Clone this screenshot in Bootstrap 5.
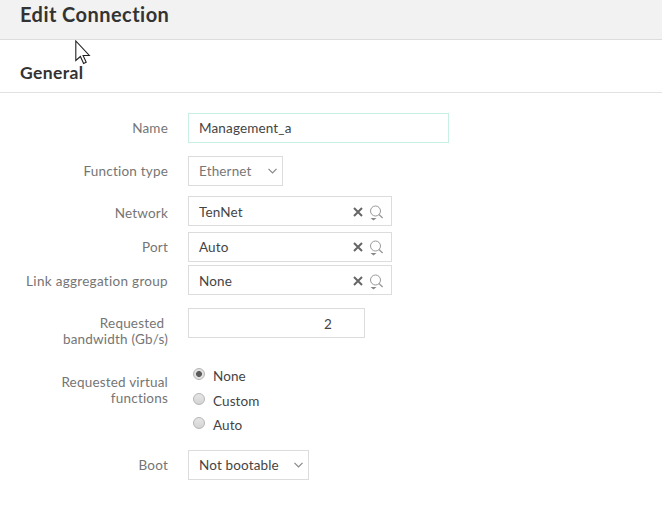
<!DOCTYPE html>
<html lang="en">
<head>
<meta charset="utf-8">
<meta name="viewport" content="width=device-width, initial-scale=1">
<title>Edit Connection</title>
<link href="https://cdn.jsdelivr.net/npm/bootstrap@5.3.0/dist/css/bootstrap.min.css" rel="stylesheet">
<style>
body{font-family:Lato,"Open Sans",sans-serif;font-size:13.5px;line-height:16px;color:#444;height:518px;overflow:hidden;background:#fff}
.page-head{height:40px;background:#f2f2f2;border-bottom:1px solid #dcdcdc;padding:2px 20px 0}
.page-head h1{font-size:20px;line-height:24px;font-weight:700;color:#333;letter-spacing:.45px}
.section-head{height:53px;border-bottom:1px solid #e2e2e2;padding:21px 20px 0}
.section-head h2{font-size:17.5px;line-height:24px;font-weight:700;color:#333;letter-spacing:.4px}
.field-row{gap:20px}
.field-label{width:168px;color:#757575;letter-spacing:.2px;flex:none}
.box{height:30px;border:1px solid #dcdcdc;padding:0 10px;letter-spacing:.15px;background:#fff;border-radius:0}
.box-active{border-color:#c9f0e4}
.muted{color:#777}
.w-name{width:261px}.w-func{width:95px}.w-pick{width:204px;padding-right:8px}.w-band{width:177px;padding-right:32px}.w-boot{width:121px}
.w-func,.w-boot{padding-right:5px}
.r-name{margin-top:20px}.r-func{margin-top:13px}.r-net{margin-top:10px}.r-port{margin-top:6px}.r-lag{margin-top:3px}.r-lag .field-label{letter-spacing:.3px;padding-top:2px}.r-band{margin-top:13px}
.r-net .field-label{padding-top:4px}
.r-net .box,.r-lag .box,.r-band .box{padding-top:2px}
.r-band .field-label{padding-top:8px;line-height:15.5px}
.r-virt{margin-top:18px;height:74px}.r-boot{margin-top:11px}
.r-virt .field-label{padding-top:10px;line-height:15.5px}
.dot{width:12px;height:12px;border:1px solid #b5b5b5;border-radius:50%;background:linear-gradient(#e6e6e6,#d4d4d4);flex:none;margin:3px 8px 0 5px}
.dot-on{background:radial-gradient(circle,#5c5c5c 0 2.6px,#e2e2e2 3.3px)}
.option{height:24.5px;letter-spacing:.1px}
.option span{padding-top:3px}
.pointer{position:absolute;left:75px;top:40px}
svg{display:block;flex:none}
</style>
</head>
<body>
<header class="page-head"><h1 class="m-0"><span>Edit Connection</span></h1></header>
<main>
<div class="section-head"><h2 class="m-0"><span>General</span></h2></div>
<form>
<div class="field-row r-name d-flex align-items-center"><div class="field-label text-end"><span>Name</span></div><div class="box box-active w-name d-flex align-items-center"><span>Management_a</span></div></div>
<div class="field-row r-func d-flex align-items-center"><div class="field-label text-end"><span>Function type</span></div><div class="box w-func muted d-flex align-items-center"><span>Ethernet</span><svg class="ms-auto" width="9" height="6" viewBox="0 0 9 6"><path d="M.5.8l4 4 4-4" fill="none" stroke="#888" stroke-width="1.2"/></svg></div></div>
<div class="field-row r-net d-flex align-items-center"><div class="field-label text-end"><span>Network</span></div><div class="box w-pick d-flex align-items-center"><span>TenNet</span><svg class="ms-auto" width="31" height="18" viewBox="0 0 31 18"><path d="M2 5l8 8M10 5l-8 8" stroke="#666" stroke-width="2"/><circle cx="23.5" cy="8" r="5" fill="none" stroke="#999"/><path d="M27 11.5l3.6 3.6" stroke="#999" stroke-width="1.3"/><path d="M18.5 15h6l-3 2.5z" fill="#888"/></svg></div></div>
<div class="field-row r-port d-flex align-items-center"><div class="field-label text-end"><span>Port</span></div><div class="box w-pick d-flex align-items-center"><span>Auto</span><svg class="ms-auto" width="31" height="18" viewBox="0 0 31 18"><path d="M2 5l8 8M10 5l-8 8" stroke="#666" stroke-width="2"/><circle cx="23.5" cy="8" r="5" fill="none" stroke="#999"/><path d="M27 11.5l3.6 3.6" stroke="#999" stroke-width="1.3"/><path d="M18.5 15h6l-3 2.5z" fill="#888"/></svg></div></div>
<div class="field-row r-lag d-flex align-items-center"><div class="field-label text-end"><span>Link aggregation group</span></div><div class="box w-pick d-flex align-items-center"><span>None</span><svg class="ms-auto" width="31" height="18" viewBox="0 0 31 18"><path d="M2 5l8 8M10 5l-8 8" stroke="#666" stroke-width="2"/><circle cx="23.5" cy="8" r="5" fill="none" stroke="#999"/><path d="M27 11.5l3.6 3.6" stroke="#999" stroke-width="1.3"/><path d="M18.5 15h6l-3 2.5z" fill="#888"/></svg></div></div>
<div class="field-row r-band d-flex align-items-start"><div class="field-label text-end"><span>Requested&nbsp;</span><br><span>bandwidth (Gb/s)</span></div><div class="box w-band d-flex align-items-center justify-content-end"><span>2</span></div></div>
<div class="field-row r-virt d-flex align-items-start"><div class="field-label text-end"><span>Requested virtual</span><br><span>functions</span></div>
<div><label class="option d-flex"><i class="dot dot-on"></i><span>None</span></label><label class="option d-flex"><i class="dot"></i><span>Custom</span></label><label class="option d-flex"><i class="dot"></i><span>Auto</span></label></div></div>
<div class="field-row r-boot d-flex align-items-center"><div class="field-label text-end"><span>Boot</span></div><div class="box w-boot d-flex align-items-center"><span>Not bootable</span><svg class="ms-auto" width="9" height="6" viewBox="0 0 9 6"><path d="M.5.8l4 4 4-4" fill="none" stroke="#888" stroke-width="1.2"/></svg></div></div>
</form>
</main>
<svg class="pointer" width="16" height="25" viewBox="0 0 16 25"><path d="M.8 1v19.5l4.6-4 3.2 7 2.6-1.2-3.1-6.8h6.2z" fill="#fff" stroke="#222" stroke-width="1.1"/></svg>
<script src="https://cdn.jsdelivr.net/npm/bootstrap@5.3.0/dist/js/bootstrap.bundle.min.js"></script>
</body>
</html>
